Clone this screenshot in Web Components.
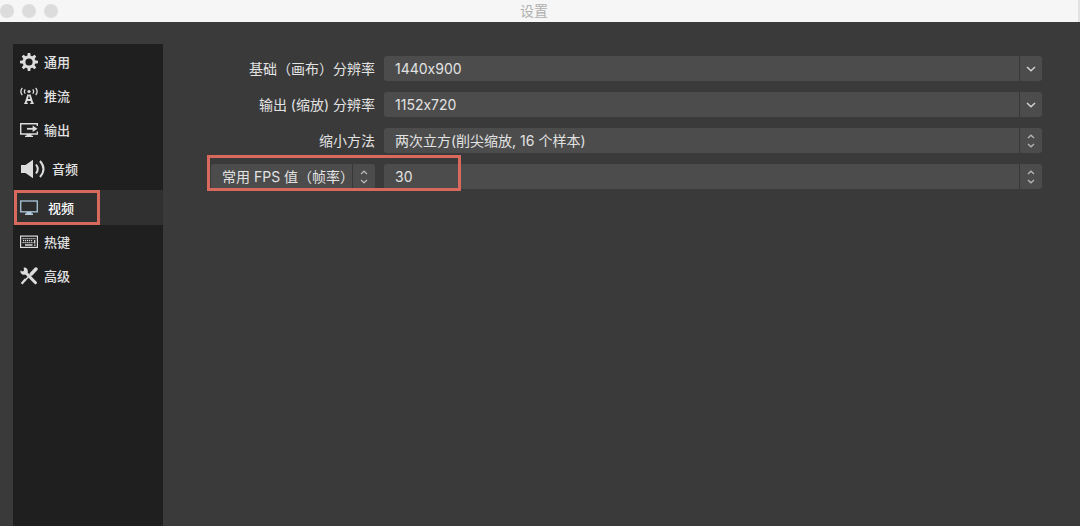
<!DOCTYPE html>
<html lang="zh-CN">
<head>
<meta charset="utf-8">
<title>设置</title>
<style>
  body {
    margin: 0;
    background: #3a3a3a;
    color: #e2e2e2;
    font-family: Inter, "Noto Sans CJK SC", sans-serif;
    font-size: 14px;
  }
  label {
    line-height: 25px;
    white-space: nowrap;
  }
</style>
</head>
<body>
<settings-window heading="设置">
  <settings-nav slot="nav">
    <nav-item icon="gear">通用</nav-item>
    <nav-item icon="antenna">推流</nav-item>
    <nav-item icon="output">输出</nav-item>
    <nav-item icon="speaker" size="large">音频</nav-item>
    <nav-item icon="monitor" size="wide" selected>视频</nav-item>
    <nav-item icon="keyboard">热键</nav-item>
    <nav-item icon="tools">高级</nav-item>
  </settings-nav>
  <form-row>
    <label slot="label" for="base">基础（画布）分辨率</label>
    <select-box id="base" name="基础（画布）分辨率" value="1440x900" arrow="down"></select-box>
  </form-row>
  <form-row>
    <label slot="label" for="scaled">输出 (缩放) 分辨率</label>
    <select-box id="scaled" name="输出 (缩放) 分辨率" value="1152x720" arrow="down"></select-box>
  </form-row>
  <form-row>
    <label slot="label" for="filter">缩小方法</label>
    <select-box id="filter" name="缩小方法" value="两次立方(削尖缩放, 16 个样本)" arrow="both"></select-box>
  </form-row>
  <form-row marked>
    <select-box slot="label" name="帧率类型" value="常用 FPS 值（帧率）" arrow="both"></select-box>
    <select-box name="常用 FPS 值（帧率）" value="30" arrow="both"></select-box>
  </form-row>
</settings-window>

<script>
const ICONS = {
  gear: `<svg width="18" height="18" viewBox="0 0 18 18" fill="none" stroke="#dcdcdc">
    <circle cx="9" cy="9" r="5" stroke-width="2.800"/>
    <g fill="#dcdcdc" stroke="none">
      <path d="M7.200 3.500L7.800 0h2.400l.600 3.500zM7.200 14.500l.600 3.500h2.400l.600-3.500zM3.500 7.200L0 7.800v2.400l3.500.600zM14.500 7.200l3.500.600v2.400l-3.500.600z"/>
      <path transform="rotate(45 9 9)" d="M7.200 3.500L7.800 0h2.400l.600 3.500zM7.200 14.500l.600 3.500h2.400l.600-3.500zM3.500 7.200L0 7.800v2.400l3.500.600zM14.500 7.200l3.500.600v2.400l-3.500.600z"/>
    </g></svg>`,
  antenna: `<svg width="18" height="18" viewBox="0 0 18 18" fill="none" stroke="#dcdcdc" stroke-width="1.3">
    <path d="M2.300 1Q-.600 4.500 2.300 8M5.300 2.300Q3.400 4.500 5.300 6.700M15.700 1Q18.600 4.500 15.700 8M12.700 2.300Q14.600 4.500 12.700 6.700"/>
    <circle cx="9" cy="4.500" r="1.600" fill="#dcdcdc" stroke="none"/>
    <path d="M8.300 7.500L5.600 16.300M9.700 7.500L12.400 16.300M7 13h4" stroke-width="1.900"/>
    <path d="M4.200 16.400h3.600M10.200 16.400h3.600"/></svg>`,
  output: `<svg width="18" height="16" viewBox="0 0 18 16" fill="none" stroke="#dcdcdc" stroke-width="1.400">
    <path d="M17.300 4V1.700H.700v10.300h16.600v-2.400"/>
    <path d="M7 6.800h7" stroke-width="1.800"/>
    <path d="M12.600 3.500L17.500 6.800 12.600 10.100z" fill="#dcdcdc" stroke="none"/>
    <path d="M6.500 12h5v1.700H13V15H5v-1.300h1.500z" fill="#dcdcdc" stroke="none"/></svg>`,
  speaker: `<svg width="26" height="20" viewBox="0 0 26 20" fill="none" stroke="#dcdcdc" stroke-width="2">
    <path d="M1 6h4.500L13 .800v18.400L5.500 14H1z" fill="#dcdcdc" stroke="none"/>
    <path d="M16 5.500Q19.500 10 16 14.500M20 2Q27 10 20 18"/></svg>`,
  monitor: `<svg width="18" height="16" viewBox="0 0 18 16">
    <rect x=".700" y="1" width="16.600" height="10.800" fill="#2c2c2c" stroke="#a3bdd0" stroke-width="1.400"/>
    <path d="M6.500 12h5v1.600H13V15H5v-1.400h1.500z" fill="#b4cadb"/></svg>`,
  keyboard: `<svg width="18" height="14" viewBox="0 0 18 14" fill="none" stroke="#dcdcdc">
    <rect x=".600" y="1.100" width="16.800" height="11.300" stroke-width="1.200"/>
    <path d="M2.500 3.700h13M3 5.700h10M2.500 7.700h11" stroke-width="1.300" stroke-dasharray="1.200 .800"/>
    <path d="M5 10h7.500M14.700 5v3.500M14 10.200h1.500" stroke-width="1.300"/></svg>`,
  tools: `<svg width="18" height="18" viewBox="0 0 18 18" fill="none" stroke="#dcdcdc" stroke-linecap="round">
    <path d="M6 6l9.500 9.700" stroke-width="3"/>
    <path d="M3.700.600L4 3.500 2.800 4.400.400 3.500C0 6.300 2.300 8.500 5.200 7.600L7.800 5.300C8.200 2.300 6.400.300 3.700.600z" fill="#dcdcdc" stroke="none"/>
    <path d="M16 2L11.300 7" stroke-width="3.400"/>
    <path d="M11.300 7L5.500 12.800" stroke-width="1.600"/>
    <path d="M5.600 12.300L1.600 16.700" stroke-width="2.400" stroke-linecap="butt"/></svg>`
};

const ARROWS = {
  down: `<svg width="10" height="6" viewBox="0 0 10 6"><path d="M1 1l4 3.800L9 1"/></svg>`,
  both: `<svg width="8" height="14" viewBox="0 0 8 14"><path d="M1 4l3-2.800L7 4M1 10l3 2.800L7 10"/></svg>`
};

class SettingsWindow extends HTMLElement {
  constructor() {
    super();
    this.attachShadow({ mode: 'open' });
  }

  connectedCallback() {
    this.shadowRoot.innerHTML = `
      <style>
        :host {
          display: flex;
          flex-direction: column;
          min-height: 100vh;
        }
        header {
          position: relative;
          display: flex;
          align-items: center;
          justify-content: center;
          height: 22px;
          padding-right: 10px;
          background: #f6f6f6;
          border-right: 2px solid #e2e2e2;
          box-sizing: border-box;
        }
        h1 {
          margin: 0;
          font-size: 14px;
          line-height: 20px;
          font-weight: 400;
          color: #b0b0b0;
        }
        .lights {
          position: absolute;
          left: 0;
          display: flex;
          gap: 8px;
        }
        .lights i {
          width: 14px;
          height: 14px;
          border-radius: 50%;
          background: #dcdcdc;
        }
        .content {
          flex: 1;
          display: flex;
          padding: 22px 38px 0 13px;
        }
        main {
          flex: 1;
          display: flex;
          flex-direction: column;
          gap: 11px;
          padding-top: 12px;
        }
      </style>
      <header>
        <div class="lights"><i></i><i></i><i></i></div>
        <h1></h1>
      </header>
      <div class="content">
        <slot name="nav"></slot>
        <main><slot></slot></main>
      </div>
    `;
    this.shadowRoot.querySelector('h1').textContent = this.getAttribute('heading');
  }
}

class SettingsNav extends HTMLElement {
  constructor() {
    super();
    this.attachShadow({ mode: 'open' });
    this.shadowRoot.innerHTML = `
      <style>
        :host {
          display: block;
          width: 150px;
          background: #1f1f1f;
        }
        nav {
          display: flex;
          flex-direction: column;
          padding-top: 1px;
        }
      </style>
      <nav><slot></slot></nav>
    `;
  }
}

class NavItem extends HTMLElement {
  constructor() {
    super();
    this.attachShadow({ mode: 'open' });
  }

  connectedCallback() {
    this.shadowRoot.innerHTML = `
      <style>
        :host {
          display: block;
          position: relative;
          height: 34px;
        }
        :host([size="large"]) {
          height: 43px;
        }
        button {
          display: flex;
          align-items: center;
          gap: 6px;
          width: 100%;
          height: 100%;
          padding: 0 0 0 7px;
          border: 0;
          background: none;
          color: inherit;
          font: 500 13px/20px Inter, "Noto Sans CJK SC", sans-serif;
        }
        :host([size="wide"]) button {
          gap: 10px;
        }
        :host([selected]) {
          height: 35px;
        }
        :host([selected]) button {
          background: #303030;
          color: #fff;
        }
        /* marker frame round the selected page */
        :host([selected])::after {
          content: "";
          position: absolute;
          inset: 0 auto 0 1px;
          width: 86px;
          box-sizing: border-box;
          border: 3px solid #d9695c;
          pointer-events: none;
        }
      </style>
      <button type="button">${ICONS[this.getAttribute('icon')]}<span><slot></slot></span></button>
    `;
  }
}

class FormRow extends HTMLElement {
  constructor() {
    super();
    this.attachShadow({ mode: 'open' });
    this.shadowRoot.innerHTML = `
      <style>
        :host {
          position: relative;
          display: grid;
          grid-template-columns: 212px 1fr;
          column-gap: 9px;
          align-items: center;
        }
        .label {
          display: flex;
          justify-content: flex-end;
        }
        :host([marked])::after {
          content: "";
          position: absolute;
          inset: -9px auto -2px 44px;
          width: 254px;
          box-sizing: border-box;
          border: 3px solid #d9695c;
          pointer-events: none;
        }
      </style>
      <div class="label"><slot name="label"></slot></div>
      <slot></slot>
    `;
  }
}

class SelectBox extends HTMLElement {
  // lets <label for> point at the element
  static formAssociated = true;

  constructor() {
    super();
    this.attachShadow({ mode: 'open', delegatesFocus: true });
  }

  connectedCallback() {
    this.shadowRoot.innerHTML = `
      <style>
        :host {
          display: grid;
          grid-template-columns: 1fr 23px;
          height: 25px;
          border-radius: 3px;
          overflow: hidden;
          background: #4c4c4c;
        }
        select {
          grid-area: 1 / 1 / 2 / 3;
          appearance: none;
          min-width: 0;
          margin: 0;
          padding: 0 20px 0 11px;
          border: 0;
          border-radius: 0;
          outline: none;
          background: none;
          color: inherit;
          font: 400 14px/25px Inter, "Noto Sans CJK SC", sans-serif;
          font-variant-ligatures: no-contextual;
        }
        .arrow {
          grid-area: 1 / 2 / 2 / 3;
          display: flex;
          align-items: center;
          justify-content: center;
          border-left: 1px solid #383838;
          pointer-events: none;
        }
        path {
          fill: none;
          stroke: #d0d0d0;
          stroke-width: 1.5;
        }
        :host([arrow="both"]) path {
          stroke: #b4b4b4;
          stroke-width: 1.3;
        }
      </style>
      <select><option></option></select>
      <span class="arrow">${ARROWS[this.getAttribute('arrow')]}</span>
    `;
    const select = this.shadowRoot.querySelector('select');
    select.setAttribute('aria-label', this.getAttribute('name'));
    select.options[0].textContent = this.getAttribute('value');
  }
}

customElements.define('settings-window', SettingsWindow);
customElements.define('settings-nav', SettingsNav);
customElements.define('nav-item', NavItem);
customElements.define('form-row', FormRow);
customElements.define('select-box', SelectBox);
</script>
</body>
</html>
